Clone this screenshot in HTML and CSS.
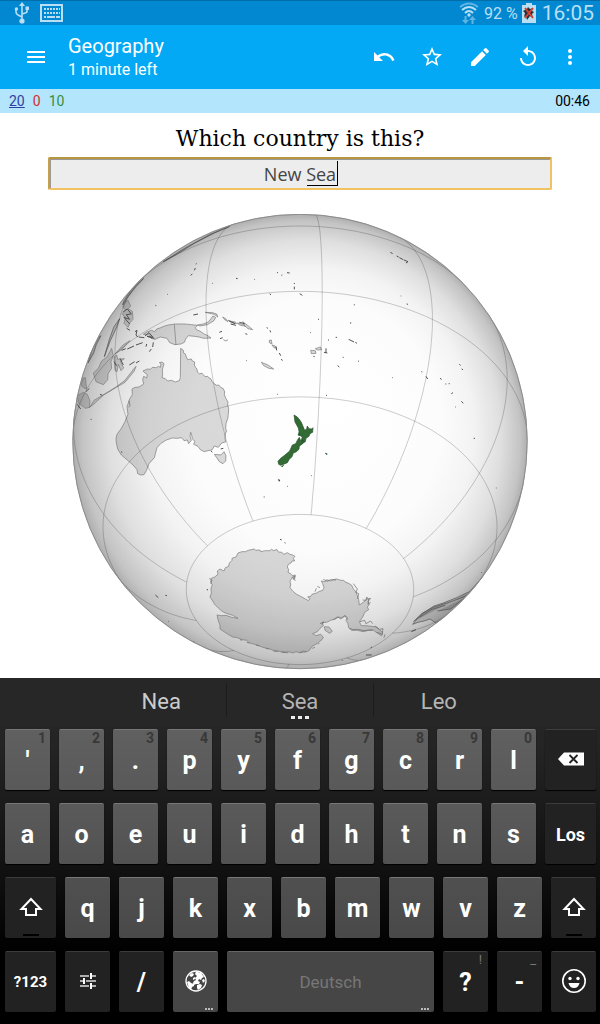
FILE: index.html
```html
<!DOCTYPE html>
<html lang="en">
<head>
<meta charset="utf-8">
<meta name="viewport" content="width=device-width, initial-scale=1">
<title>Geography</title>
<link rel="stylesheet" href="styles.css">
</head>
<body>
<div class="status">
  <svg class="status-usb" viewBox="0 0 16 22" width="16" height="22" aria-hidden="true"><path d="M8 3v15M2 7v3q0 2 2 3l4 2M13 6v3q0 2-2 2l-3 1" fill="none" stroke="currentColor" stroke-width="1.6"/><path d="M8 0l3 4H5z"/><circle cx="8" cy="19" r="2.6"/><circle cx="2.4" cy="7" r="1.7"/><path d="M11.500 4.500h3.500v3.500h-3.500z"/></svg>
  <svg viewBox="0 0 24 18" width="24" height="18" aria-hidden="true"><path d="M1 1h21v16H1z" fill="none" stroke="currentColor" stroke-width="2"/><path d="M4 5h16M4 9h16" stroke="currentColor" stroke-width="2" stroke-dasharray="2 1"/><path d="M4 13h2M7 13h8M16 13h4" stroke="currentColor" stroke-width="2"/></svg>
  <span class="spacer"></span>
  <svg viewBox="0 0 20 22" width="20" height="22" aria-hidden="true"><g fill="none" stroke="currentColor" stroke-width="2"><path d="M1 5q9-7 18 0" opacity=".5"/><path d="M3 8q7-6 14 0M6 11q4-4 8 0"/></g><circle cx="10" cy="13" r="1.700"/><path d="M5.500 14h2v4H10l-3.500 4L3 18h2.500zM12.500 22h2v-4H17l-3.500-4-3.500 4h2.500z" opacity=".5"/></svg>
  <span class="battery-text">92 %</span>
  <svg viewBox="0 0 14 20" width="14" height="20" aria-hidden="true"><path d="M4 0h6v2h4v18H0V2h4z"/><path d="M3 5l2 1 1-2 2 2 3-1-1 3 2 1-2 2 1 4-3-2-3 4-1-4-2 1 1-4-2-2 2-1z" fill="#263238"/><path d="M3 5l8 10M11 5L3 15" stroke="#d84331" stroke-width="2"/></svg>
  <span class="clock">16:05</span>
</div>
<header class="toolbar">
  <button class="tool menu" aria-label="Menu"><svg viewBox="0 0 24 24"><path d="M3 18h18v-2H3v2zm0-5h18v-2H3v2zm0-7v2h18V6H3z"/></svg></button>
  <div class="titles"><h1>Geography</h1><p>1 minute left</p></div>
  <button class="tool" aria-label="Undo"><svg viewBox="0 0 24 24"><path d="M12.500 8c-2.650 0-5.050.99-6.900 2.600L2 7v9h9l-3.620-3.620c1.390-1.160 3.160-1.880 5.120-1.880 3.540 0 6.550 2.310 7.600 5.500l2.370-.78C21.080 11.030 17.150 8 12.500 8z"/></svg></button>
  <button class="tool" aria-label="Mark"><svg viewBox="0 0 24 24"><path d="M22 9.240l-7.190-.62L12 2 9.190 8.630 2 9.240l5.460 4.730L5.820 21 12 17.270 18.180 21l-1.630-7.030L22 9.240zM12 15.400l-3.760 2.270 1-4.280-3.320-2.880 4.380-.38L12 6.100l1.710 4.040 4.380.38-3.320 2.880 1 4.280L12 15.400z"/></svg></button>
  <button class="tool" aria-label="Edit"><svg viewBox="0 0 24 24"><path d="M3 17.250V21h3.750L17.810 9.940l-3.750-3.750L3 17.250zM20.710 7.040a1 1 0 0 0 0-1.410l-2.340-2.340a1 1 0 0 0-1.410 0l-1.830 1.830 3.750 3.750 1.830-1.830z"/></svg></button>
  <button class="tool" aria-label="Replay"><svg viewBox="0 0 24 24"><path d="M12 5V1L7 6l5 5V7c3.310 0 6 2.690 6 6s-2.690 6-6 6-6-2.690-6-6H4c0 4.420 3.580 8 8 8s8-3.580 8-8-3.580-8-8-8z"/></svg></button>
  <button class="tool more" aria-label="More options"><svg viewBox="0 0 24 24"><path d="M12 8a2 2 0 1 0 0-4 2 2 0 0 0 0 4zm0 2a2 2 0 1 0 0 4 2 2 0 0 0 0-4zm0 6a2 2 0 1 0 0 4 2 2 0 0 0 0-4z"/></svg></button>
</header>
<div class="counts"><span class="new">20</span><span class="learn">0</span><span class="due">10</span><time>00:46</time></div>
<main class="card">
  <label class="question" for="answer">Which country is this?</label>
  <div class="answer-box"><input class="answer" id="answer" type="text" value="New Sea"><span class="composing" aria-hidden="true"></span></div>
  <svg class="globe" viewBox="72 214 456 456" role="img" aria-label="Globe with New Zealand highlighted">
    <defs>
      <radialGradient id="shade" gradientUnits="userSpaceOnUse" cx="300" cy="441.500" r="228" fx="335" fy="405">
        <stop offset="0" stop-color="#fff"/><stop offset=".55" stop-color="#fcfcfc"/><stop offset=".72" stop-color="#f3f3f3"/><stop offset=".86" stop-color="#dfdfdf"/><stop offset=".96" stop-color="#c4c4c4"/><stop offset="1" stop-color="#adadad"/>
      </radialGradient>
      <clipPath id="disc"><circle cx="300" cy="441.500" r="227.500"/></clipPath>
    </defs>
    <circle cx="300" cy="441.500" r="227.500" fill="url(#shade)"/>
    <g clip-path="url(#disc)">
      <g transform="translate(60 205) scale(.33333)">
        <g class="land">
          <path d="M362 430l8 6 1 8 5 3 3 9 4 8 5-1 6-1 3 6 7 3-1 9 4 8 4 4 1 9 6 5 8-1 5 5 4 5 8-1 4 5 5 2 4 8 5 6 9 6 6-1 6 7 8 4 4 10-1 8 5 12 6 10-1 9 3 11-2 27-6 18-1 16 3 5-4 10-1 14 2 10-12 3-10 13-12-4-7 12-12 2-11 3-11-5-8-11-13-6 4-9-8-7-2-12-3-8-2 12 4 12-8 10-4-11-10 2-7-9-14 2-14-1-18 6-16 10-12 13-8 30-16 18-7 19-8 14-10 1-9-4-2-12-12-14-16-14-19-16-11-18-4-18-1-14 3-12 13-18 10-18 10-24-3-23 8-23 8-13-1-17 9-5 12-1 14-9-3-14 3-9 9 5 2-10-8-6-5-5 13-6 9 1 6-6 12 1 6-4 6 3 2-10-5-4 8-2 6 5-4 14-1 9 1 10-2 9 10 3 7 7 12-2 11 5 12-4 3-9z"/>
          <path d="M463 748l20 2 9-10 6 12-1 16-8 8-11-6-8-12z"/>
          <path d="M250 388l12-8 13-4 9 4 6-8 10-3 14-6 11-3 20-3h30l20 2 17 2-6 7 3 6 10 4 12 8 14 7 8 6-22 1-14-4-14-2-18-2-8 10-4 10-10 5-18 2-16-6-8-13-20-4-16 7-12-3-4-10zM343 358l5 62"/>
          <path d="M412 360l18-3 15-6 8-10 6-8 8 4-5 10-20 12-22 4zM436 322l22 1 13 5 2 8-10-8z"/>
          <path d="M488 336l10 6 6 8-10-6zM508 348l18 3 4 5-16-3zM532 354l18 4 6 6-18-4zM548 350l16 12 14 12-14-3-10-9zM604 472l20 8 17 12-14-2-16-8z"/>
          <path d="M628 406l6-1 2 12-8-4zM636 420l8 2 5 8-7-2zM752 436l14 1 2 8-14 1zM766 431l15-5 4 8-12 1z"/>
          <path d="M100 504l15-14 10-22 16-12 14-26 5 22-7 18 2 20-11 16-1 18-13 15-22-9zM195 290l9-4 8 17-7 8 12 8 2 24-9 10-6 14-12-12 4-15-9-14 9-12-8-8zM52 572l18-10 12 6 8 20-2 19-12 3-21-16zM64 540l4-20 8-2 4 34-10-4z"/>
          <path d="M88 608l14-22 20-12 22-13 25-16 26-19 26-34 7-8-5 14-28 34-24 14-40 24-28 26zM162 456l8-6 3 13 20-2-12 8 10 20-8 8-8-19-4 22-6-4zM166 446l20-13 16-18 8-8-20 12z"/>
          <path d="M84 474l17-30 8-26 14-26-8 6-18 34zM133 455l18-48 18-38 10-28-17 24-14 38zM188 300l15-24 26-32 22-24-38 35-22 34zM310 170l43-24 52-32 58-30 46-20-60 25-77 42z" class="dark"/>
          <path d="M565 1036L583 1032 587 1036 600 1035 602 1040 616 1037 630 1037 634 1033 642 1037 650 1033 655 1041 665 1042 672 1048 682 1043 690 1048 698 1050 705 1054 700 1060 704 1068 696 1068 693 1074 685 1078 682 1086 686 1094 684 1102 692 1106 697 1112 706 1110 704 1122 697 1118 690 1128 692 1140 690 1148 700 1160 710 1168 722 1174 745 1187 750 1181 743 1176 752 1174 756 1168 770 1164 776 1160 788 1156 792 1148 788 1136 784 1128 796 1130 800 1124 812 1128 820 1124 830 1122 842 1126 850 1126 858 1132 868 1136 876 1142 880 1152 886 1158 892 1172 896 1184 898 1200 904 1196 915 1188 920 1182 932 1180 924 1190 928 1198 922 1206 926 1214 914 1222 908 1236 898 1250 904 1262 918 1262 935 1264 950 1266 960 1276 968 1282 964 1292 952 1284 940 1276 925 1276 910 1280 892 1276 875 1276 866 1268 864 1256 858 1246 862 1238 856 1232 845 1238 835 1236 826 1242 812 1246 800 1252 786 1252 790 1262 780 1270 772 1280 758 1286 768 1292 782 1288 790 1296 786 1304 776 1312 764 1320 756 1324 750 1334 742 1340 730 1338 720 1344 708 1340 700 1344 684 1340 670 1343 655 1338 640 1336 626 1331 612 1328 600 1324 584 1318 568 1314 560 1306 546 1304 532 1298 518 1296 504 1288 492 1280 480 1272 480 1260 475 1248 471 1230 485 1232 498 1231 515 1237 534 1240 518 1231 502 1226 488 1220 476 1210 464 1198 458 1188 450 1176 454 1164 453 1150 457 1140 452 1130 454 1120 464 1116 474 1108 472 1098 480 1092 492 1098 496 1088 506 1084 508 1074 516 1066 516 1060 528 1056 534 1044 546 1040 556 1040z"/>
          <path d="M793 1265l14 1 10 13-8 6-14-9z"/>
        </g>
        <g class="land dark">
          <path d="M1058 1258l14-17 20-18 30-20 28-9 40-16 38-18 56-60-50 84-80 70-9-10-17 10-18-12-18 6-18 4z"/>
          <path d="M1060 1250l26-25 34-18 44-14 50-18 36-24M1080 1236l36-23 40-12M1132 1218l40-6 40-32" fill="none"/>
        </g>
        <path class="rough" d="M190 320l12-8 12 15-15 2 10 14-17-6 17 20M255 393l12-10 12 14-18-3 22 6M225 380l6-4-3 14 5 6M236 396l17 2M185 436l12-5M202 432l20-9M228 420l20-7M258 425l2-8M280 412l-2 14M268 440l6-8M208 480l16-10M228 474l10-6M162 470l8 12M180 460l10 20M200 370l10 6M52 598l10 14M78 560l10-10M120 568l7 3M400 330l14-3M478 382l8-3M480 401l8-3M505 346l20 10M512 357l16 4M538 352l16 4M556 386l6 2M620 368l4 2M630 376l2 6M648 424l2 12M658 444l4 8M664 462l3 5M392 211l5-4M403 196l3-7M408 178l1-3M286 301l3 1M322 268h2M456 235h2M528 220l5 1M583 223l2 1M651 202l3 2M664 211l3-1M681 203l8 1M703 234v3M703 245v8M719 266l8 5M630 266l2 4M558 467h2M651 568h2M92 643h3M611 876h3M657 824l2 3M681 844h2M991 142l7 4M1010 153l6 3M1018 158l12 6M1032 165l12 5-6 4M1022 273h2M1040 297l4 1M883 298v3M872 352v4M774 343h3M750 382l2 1M804 405h3M827 397h4M866 403l16 8M886 412l5 3M894 468l3 1M833 482l5 4M848 457h3M798 430v14M792 442l10 2M760 454l4 1M996 518h2M1084 500l3 1M1098 514l5 8M1140 520l5 3M1156 537h3M1166 536h3M1174 566l5-3M1198 478l4 3M1205 492l4 2M1204 589l6 6M1186 606h2M1241 700h4M1309 848v2M798 571h3M753 812h2M660 1003l5 2M674 1012l2 3M442 1152v4M286 1170l9 8M316 1171l5 1M324 1249h2M400 1310l3 1M918 1350l17 0M932 1328l4-2M1054 1280l14-6M847 1366v2M1264 1102l2 2M453 738l4 4M482 732l8-2M183 740l4 2"/>
        <path class="coast" d="M490 404l8 4 6-4M206 607l4-5-3-15M448 1120l8 6-4 10M540 1304l6 2M560 1312l8 2M588 1320l10 2M618 1330l8 2M640 1338l15 2M665 1340l20 4M720 1342l18-1M757 1330l8-3M774 1318l4-4M695 1118l10-5-5 10 7 3M765 1160l4-10M772 1144l8 4M790 1123l12 6 10-5 16 1M880 1136l12 16-4 10 8 4-3 16M908 1185l10 1 2-10 6 8-2 14 8-6M900 1250l14-4 4 10 14-8 6 8M945 1263l14 10 10-2-3 20M950 1282l13 4M780 1256l12-5-6 8M820 1244l13-8 10 6 12-10 8 12M975 1288l-3 10M868 1270l12 4 12-1 20 4 26-3"/>
        <g class="nz">
          <path d="M702 630l10 6 8 10 5 8 4 10 5 12 6-4 2-9 5 8 8 1 4-4-1 14-8 4-3 8-9 6-2 10-10 6-4-6 5-14-11-7 1-10-2-10-10-18z"/>
          <path d="M718 697l4 10 8-1-2 10-10 8-1 9-9 8-8 3-4 11-8 8-6 10-9 4-11 4-6-3-2-9 8-9 13-10 14-12 8-18 10-4 6-12z"/>
          <path d="M665 784l6-3-5 5zM655 824l4 1-1 4zM796 745l5 1v3zM715 687h5v4h-5z"/>
        </g>
      </g>
      <path class="graticule" id="graticule"/>
    </g>
    <circle class="limb" cx="300" cy="441.500" r="227.200"/>
  </svg>
</main>
<section class="keyboard" aria-label="Keyboard">
  <div class="suggestions"><button class="first">Nea</button><button class="current">Sea</button><button>Leo</button></div>
  <div class="keys">
    <div class="row">
      <button class="key">'<small>1</small></button><button class="key">,<small>2</small></button><button class="key">.<small>3</small></button><button class="key">p<small>4</small></button><button class="key">y<small>5</small></button><button class="key">f<small>6</small></button><button class="key">g<small>7</small></button><button class="key">c<small>8</small></button><button class="key">r<small>9</small></button><button class="key">l<small>0</small></button>
      <button class="key fn wide" aria-label="Delete"><svg viewBox="0 0 26 14" width="26" height="14"><path d="M0 7l6-6.500h20v13H6z" fill="#fff"/><path d="M11.500 3l8 8M19.500 3l-8 8" stroke="#222" stroke-width="1.800"/></svg></button>
    </div>
    <div class="row">
      <button class="key">a</button><button class="key">o</button><button class="key">e</button><button class="key">u</button><button class="key">i</button><button class="key">d</button><button class="key">h</button><button class="key">t</button><button class="key">n</button><button class="key">s</button><button class="key fn wide go">Los</button>
    </div>
    <div class="row">
      <button class="key fn wide shift" aria-label="Shift"><svg viewBox="0 0 24 20" width="24" height="20"><path d="M12 2L2.500 12H7v6h10v-6h4.500z" fill="none" stroke="#fff" stroke-width="2"/></svg></button><button class="key">q</button><button class="key">j</button><button class="key">k</button><button class="key">x</button><button class="key">b</button><button class="key">m</button><button class="key">w</button><button class="key">v</button><button class="key">z</button><button class="key fn shift" aria-label="Right shift"><svg viewBox="0 0 24 20" width="24" height="20"><path d="M12 2L2.500 12H7v6h10v-6h4.500z" fill="none" stroke="#fff" stroke-width="2"/></svg></button>
    </div>
    <div class="row">
      <button class="key fn wide symbols">?123</button>
      <button class="key fn" aria-label="Settings"><svg viewBox="0 0 18 18" width="18" height="18"><path d="M1 4h9M13 4h4M1 9h3M7 9h10M1 14h9M13 14h4" stroke="#ddd" stroke-width="1.500"/><path d="M12 1v6M5 6v6M12 11v6" stroke="#fff" stroke-width="2"/></svg></button>
      <button class="key fn">/</button>
      <button class="key dots" aria-label="Language"><svg viewBox="0 0 22 22" width="22" height="22"><circle cx="11" cy="11" r="10" fill="none" stroke="#fff" stroke-width="1.300"/><path d="M11 1.500l5 1.500 3 4-2 1-1 2-2-1-1 2 2 1-1 2-3 0-2 1-1-2 1-2 2-1-1-2 2-2-2-2zM4 5l3-2 2 1-1 2-2 1zM8 8l2-1 0 2-2 1zM17 10l2-1 1 2-2 2zM2 12l2-1 2 2 3 1 0 2-2 1-1 3-2-2zM12 15l3-1 2 1-1 3-3 2-1-2z" fill="#fff"/></svg></button>
      <button class="key space dots">Deutsch</button>
      <button class="key fn">?<small>!</small></button><button class="key fn">-<small>_</small></button>
      <button class="key fn" aria-label="Emoji"><svg viewBox="0 0 24 24" width="24" height="24"><circle cx="12" cy="12" r="11.200" fill="none" stroke="#fff" stroke-width="1.600"/><circle cx="8" cy="9.500" r="1.700" fill="#fff"/><circle cx="16" cy="9.500" r="1.700" fill="#fff"/><path d="M6.500 14h11q-1 5-5.500 5t-5.500-5z" fill="#fff"/></svg></button>
    </div>
  </div>
</section>
<script src="globe.js"></script>
</body>
</html>
```
FILE: globe.js
```js
// Orthographic graticule, one line every 30 degrees, meridians ending at 60 degrees south.
const RAD = Math.PI / 180;
const CENTER = { lat: -41.3 * RAD, lon: 174.4 * RAD };

function project(lat, lon) {
  const p = lat * RAD, l = lon * RAD - CENTER.lon;
  const z = Math.sin(CENTER.lat) * Math.sin(p) + Math.cos(CENTER.lat) * Math.cos(p) * Math.cos(l);
  if (z < 0) return null;
  const x = Math.cos(p) * Math.sin(l);
  const y = Math.cos(CENTER.lat) * Math.sin(p) - Math.sin(CENTER.lat) * Math.cos(p) * Math.cos(l);
  return (300 + 227.5 * x).toFixed(1) + ' ' + (441.5 - 227.5 * y).toFixed(1);
}

function line(points) {
  let d = '', pen = false;
  for (const [lat, lon] of points) {
    const at = project(lat, lon);
    if (at) d += (pen ? 'L' : 'M') + at;
    pen = Boolean(at);
  }
  return d;
}

let path = '';
for (let lat = -60; lat <= 30; lat += 30) {
  path += line(Array.from({ length: 361 }, (_, i) => [lat, i]));
}
for (let lon = 0; lon < 360; lon += 30) {
  path += line(Array.from({ length: 121 }, (_, i) => [i - 60, lon]));
}
document.getElementById('graticule').setAttribute('d', path);
```
FILE: styles.css
```css
* { box-sizing: border-box; }
body { margin: 0; min-height: 100vh; display: flex; flex-direction: column; background: #fff; font-family: Roboto, "Liberation Sans", sans-serif; }
button { border: 0; padding: 0; background: none; color: inherit; font: inherit; }

.status { display: flex; align-items: center; height: 25px; padding: 0 6px 0 14px; background: #0288d1; border-top: 1px solid #026da7; color: #b9dff4; }
.status svg { fill: currentColor; flex: none; }
.status-usb { margin-right: 10px; }
.spacer { flex: 1; }
.battery-text { margin: 0 4px 0 5px; font-size: 16px; }
.clock { margin-left: 6px; font-size: 21px; }

.toolbar { display: flex; align-items: center; height: 64px; padding: 0 12px; background: #03a9f4; color: #fff; }
.tool { width: 48px; height: 48px; display: grid; place-items: center; }
.tool svg { width: 24px; height: 24px; fill: #fff; }
.more { width: 36px; }
.titles { flex: 1; padding-left: 8px; }
.titles h1, .titles p { margin: 0; font-weight: 400; }
.titles h1 { font-size: 20px; line-height: 26px; }
.titles p { font-size: 16px; line-height: 22px; }

.counts { display: flex; gap: 8px; align-items: center; height: 24px; padding: 0 10px 0 9px; background: #b3e5fc; font-size: 14px; }
.counts time { margin-left: auto; color: #000; }
.new { color: #303f9f; text-decoration: underline; }
.learn { color: #d32f2f; }
.due { color: #388e3c; }

.card { flex: 1; display: flex; flex-direction: column; align-items: center; padding: 10px 8% 8px; }
.question { font: 22px/32px "DejaVu Serif", serif; color: #000; margin-bottom: 2px; }
.answer-box { position: relative; width: 100%; }
.answer { display: block; width: 100%; height: 33px; padding: 0; border: 2px solid #f0c263; border-top-color: #b8963f; border-left-color: #c9a04a; border-radius: 2px; outline: 0; background: #ededed; box-shadow: inset 1px 1px #999; color: #444; font: 18px "Open Sans", "Noto Sans", sans-serif; text-align: center; }
.composing { position: absolute; left: calc(50% + 7px); top: 4px; width: 31px; height: 25px; border-right: 1px solid #000; border-bottom: 1px solid #000; }
.globe { width: 100%; max-width: 456px; margin-top: 24px; }
.land path { fill: rgba(0, 0, 0, .14); stroke: #777; stroke-width: 2; stroke-linejoin: round; }
.land.dark path, .land .dark { stroke: #4c4c4c; }
.rough, .coast { fill: none; stroke: #505050; stroke-width: 3; }
.coast { stroke: #666; stroke-width: 2; }
.nz path { fill: #336b35; stroke: #24502a; stroke-width: 2; }
.graticule { fill: none; stroke: #000; stroke-opacity: .2; }
.limb { fill: none; stroke: #8c8c8c; stroke-width: 1; }

.keyboard { background: linear-gradient(#292929, #242424 20%, #111 55%, #000 80%); color: #fff; }
.suggestions { display: grid; grid-template-columns: 131fr 148fr 131fr; height: 47px; padding: 0 16%; background: #272727; color: #b4b4b4; font-size: 22px; }
.suggestions button { position: relative; }
.suggestions .first { color: #ccc; }
.current::before { content: ""; position: absolute; inset: 6px 0 9px; border: solid #1b1b1b; border-width: 0 1px; }
.current::after { content: ""; position: absolute; left: calc(50% - 9px); top: 38px; width: 18px; height: 3px; background: repeating-linear-gradient(90deg, #eee 0 4px, transparent 4px 7px); }
.keys { display: flex; flex-direction: column; gap: 13px; padding: 4px 4px 12px 5px; }
.row { display: flex; gap: 9px; }
.key { position: relative; flex: 45 1 0; min-width: 0; height: 61px; display: grid; place-items: center; border-radius: 2px; border-top: 1px solid #777; background: linear-gradient(#606060, #595959); box-shadow: 0 1px 1px #000; font-size: 25px; font-weight: 700; padding-top: 1px; }
.row:nth-child(2) .key { background: linear-gradient(#5a5a5a, #525252); }
.row:nth-child(3) .key { background: linear-gradient(#505050, #494949); }
.row:nth-child(4) .key { background: #464646; border-top-color: #666; }
.row .key.fn { background: #222; border-top-color: #3c3c3c; }
.key.wide { flex-grow: 51; }
.row .key.space { flex-grow: 207; color: #777; font-size: 17px; font-weight: 400; padding: 0; }
.key small { position: absolute; right: 4px; top: 0; color: #383838; font-size: 14px; line-height: 16px; }
.key.fn small { right: 6px; color: #777; font-weight: 400; font-size: 13px; }
.row .key.go { font-size: 18px; padding: 0; }
.row .key.symbols { font-size: 15px; padding: 0; }
.key:has(svg) { padding: 0; }
.key svg { margin-bottom: 2px; }
.shift::after { content: ""; position: absolute; bottom: 2px; left: calc(50% - 8px); width: 16px; height: 2px; background: #000; }
.dots::after { content: ""; position: absolute; right: 5px; bottom: 2px; width: 8px; height: 2px; background: repeating-linear-gradient(90deg, #bbb 0 2px, transparent 2px 3px); }
```
